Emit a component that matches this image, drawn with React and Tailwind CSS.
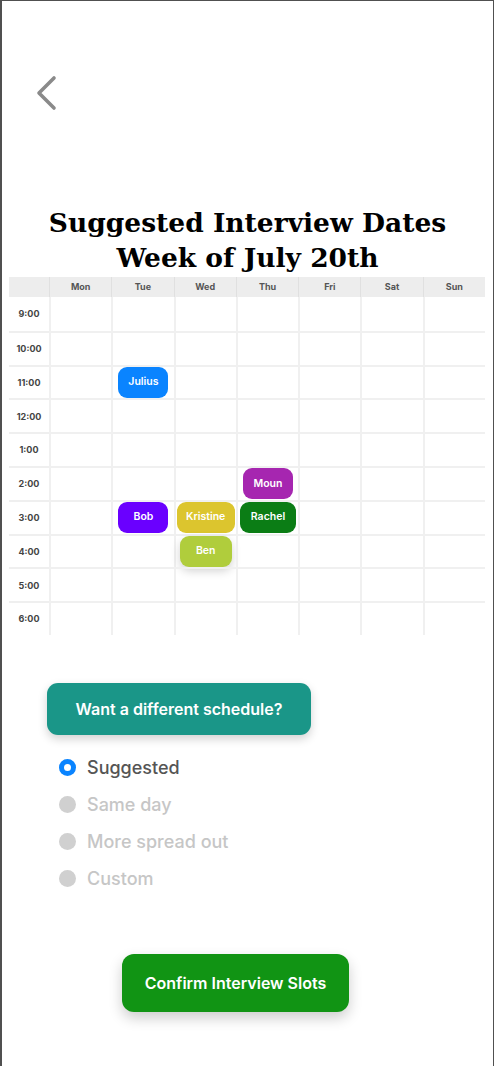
import React from "react";

const days = ["Mon", "Tue", "Wed", "Thu", "Fri", "Sat", "Sun"];
const times = ["9:00", "10:00", "11:00", "12:00", "1:00", "2:00", "3:00", "4:00", "5:00", "6:00"];

const events = {
  "2-1": { name: "Julius", cls: "bg-[#0a84ff] w-[50px]" },
  "5-3": { name: "Moun", cls: "bg-[#a626b0] w-[50px]" },
  "6-1": { name: "Bob", cls: "bg-[#6a00ff] w-[50px]" },
  "6-2": { name: "Kristine", cls: "bg-[#dcc52e] w-[58px]" },
  "6-3": { name: "Rachel", cls: "bg-[#0b7d15] w-[56px]" },
  "7-2": { name: "Ben", cls: "bg-[#b0cd3c] w-[52px] shadow-[0_4px_10px_rgba(0,0,0,0.18)]" },
};

function Radio({ label, active }) {
  return (
    <div className="flex items-center h-[37px]">
      {active ? (
        <span className="w-[17px] h-[17px] rounded-full bg-[#0a84ff] flex items-center justify-center">
          <span className="w-[7px] h-[7px] rounded-full bg-white" />
        </span>
      ) : (
        <span className="w-[17px] h-[17px] rounded-full bg-[#d0d0d0]" />
      )}
      <span
        className={
          "ml-[11px] text-[18px] font-medium " +
          (active ? "text-[#555555]" : "text-[#c6c6c6]")
        }
      >
        {label}
      </span>
    </div>
  );
}

export default function App() {
  return (
    <div
      className="w-[494px] min-h-[1066px] bg-white border-l-2 border-r border-t border-[#505050] flex flex-col"
      style={{ fontFamily: "Inter, 'Noto Sans', sans-serif" }}
    >
      <div className="pl-[33px] pt-[74px] h-[110px]">
        <svg width="24" height="36" viewBox="0 0 24 36">
          <polyline
            points="19,3 4,18 19,33"
            fill="none"
            stroke="#8a8a8a"
            strokeWidth="3.6"
            strokeLinecap="round"
            strokeLinejoin="round"
          />
        </svg>
      </div>

      <h1
        className="mt-[94px] text-center text-[26.5px] leading-[35px] font-bold text-black"
        style={{ fontFamily: "'DejaVu Serif', serif" }}
      >
        Suggested Interview Dates
        <br />
        Week of July 20th
      </h1>

      <div className="ml-[7px] mt-[2px] w-[476px]">
        <div className="grid grid-cols-[40px_repeat(7,1fr)] h-[20px] bg-[#ededed]">
          <div />
          {days.map((d) => (
            <div
              key={d}
              className="border-l border-[#e0e0e0] flex items-center justify-center text-[9px] font-bold text-[#555]"
            >
              {d}
            </div>
          ))}
        </div>
        {times.map((t, r) => (
          <div key={t} className="grid grid-cols-[40px_repeat(7,1fr)] h-[33.8px]">
            <div
              className={
                "flex items-center justify-center text-[9px] font-bold text-[#444] " +
                (r > 0 ? "border-t-2 border-[#efefef]" : "")
              }
            >
              {t}
            </div>
            {days.map((d, c) => {
              const ev = events[`${r}-${c}`];
              return (
                <div
                  key={d}
                  className={
                    "border-l-2 border-[#f0f0f0] flex justify-center " +
                    (r > 0 ? "border-t-2" : "")
                  }
                >
                  {ev && (
                    <div
                      className={
                        "h-[31px] rounded-[9px] flex items-center justify-center text-white text-[10.5px] font-semibold " +
                        ev.cls
                      }
                    >
                      {ev.name}
                    </div>
                  )}
                </div>
              );
            })}
          </div>
        ))}
      </div>

      <div className="ml-[45px] mt-[48px]">
        <button className="w-[264px] h-[52px] rounded-[11px] bg-[#1a9688] text-white text-[16px] font-semibold shadow-[0_4px_10px_rgba(0,0,0,0.18)]">
          Want a different schedule?
        </button>
      </div>

      <div className="ml-[57px] mt-[14px] flex flex-col">
        <Radio label="Suggested" active />
        <Radio label="Same day" />
        <Radio label="More spread out" />
        <Radio label="Custom" />
      </div>

      <div className="flex justify-center mt-[57px]">
        <button className="ml-[-24px] w-[227px] h-[58px] rounded-[12px] bg-[#119414] text-white text-[16px] font-semibold shadow-[0_6px_14px_rgba(0,0,0,0.2)]">
          Confirm Interview Slots
        </button>
      </div>
    </div>
  );
}
